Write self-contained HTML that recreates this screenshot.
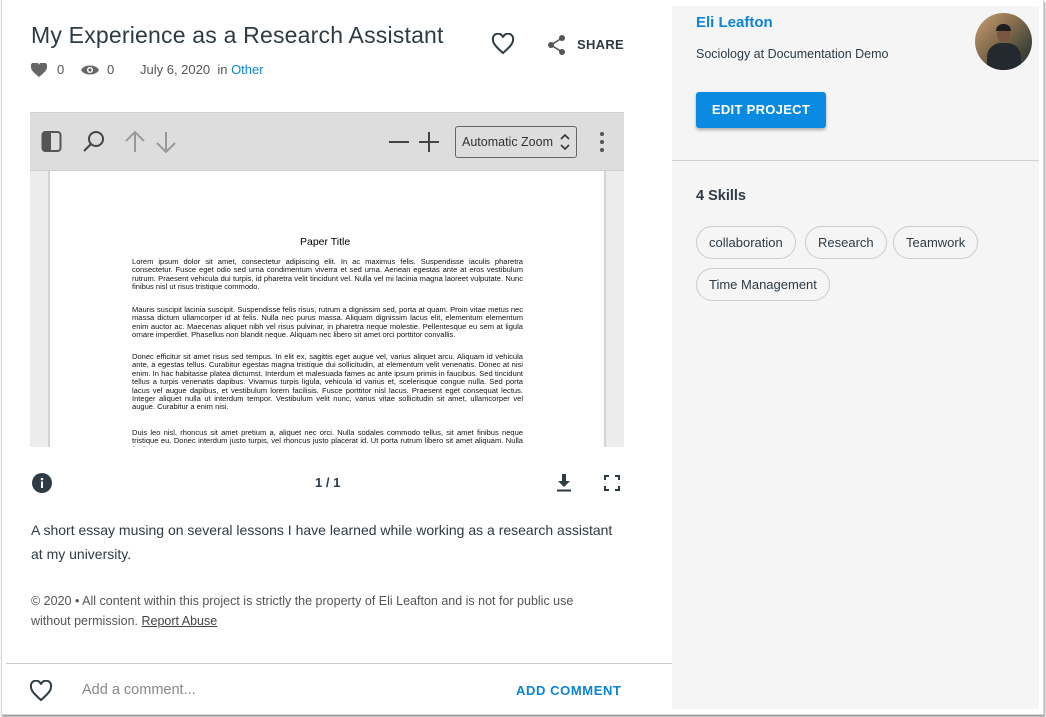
<!DOCTYPE html>
<html><head><style>
*{margin:0;padding:0;box-sizing:border-box}
body{width:1046px;height:717px;background:#fff;font-family:"Liberation Sans",sans-serif;position:relative;overflow:hidden;color:#2d3b45}
.win{position:absolute;left:1px;top:0;width:1043px;height:715px;border:1px solid #d6d6d6;border-top:none;box-shadow:1px 2px 2px #999;background:#fff}
.a{position:absolute}
.side{position:absolute;left:672px;top:6px;width:367px;height:703px;background:#f5f5f5}
.pill{position:absolute;height:33px;border:1px solid #c7cdd1;border-radius:17px;font-size:13px;color:#2d3b45;line-height:31px;padding:0 12px;background:#f5f5f5}
.pp{font-family:"Liberation Sans",sans-serif;font-size:7.55px;line-height:8.4px;text-align:justify;color:#111;position:absolute;left:132px;width:391px}
</style></head><body>
<div class="win"></div>
<div class="side"></div>
<div class="a" style="left:31px;top:22px;font-size:23px;color:#2d3b45;letter-spacing:.2px">My Experience as a Research Assistant</div>
<svg class="a" style="left:491px;top:33px" width="24" height="22" viewBox="0 0 24 22"><path d="M12 20 C4 13 2 10 2 7 A5 5 0 0 1 12 4.5 A5 5 0 0 1 22 7 C22 10 20 13 12 20Z" fill="none" stroke="#2d3b45" stroke-width="2"/></svg>
<svg class="a" style="left:547px;top:34px" width="20" height="22" viewBox="0 0 20 22"><circle cx="15" cy="4" r="3" fill="#555"/><circle cx="4" cy="11" r="3" fill="#555"/><circle cx="15" cy="18" r="3" fill="#555"/><path d="M15 4L4 11L15 18" stroke="#555" stroke-width="1.6" fill="none"/></svg>
<div class="a" style="left:577px;top:37px;font-size:13px;font-weight:bold;color:#2d3b45;letter-spacing:.3px">SHARE</div>
<svg class="a" style="left:31px;top:63px" width="16" height="14" viewBox="0 0 16 14"><path d="M8 14C2 9 0 7 0 4A4 4 0 0 1 8 2A4 4 0 0 1 16 4C16 7 14 9 8 14Z" fill="#666"/></svg>
<div class="a" style="left:57px;top:62px;font-size:13px;color:#555">0</div>
<svg class="a" style="left:81px;top:64px" width="18" height="12" viewBox="0 0 18 12"><path d="M0 6C3 0 15 0 18 6C15 12 3 12 0 6Z" fill="#666"/><circle cx="9" cy="6" r="3" fill="#fff"/><circle cx="9" cy="6" r="1.6" fill="#666"/></svg>
<div class="a" style="left:107px;top:62px;font-size:13px;color:#555">0</div>
<div class="a" style="left:140px;top:62px;font-size:13px;color:#555">July 6, 2020 &nbsp;in <span style="color:#0a84d6">Other</span></div>
<!-- pdf viewer -->
<div class="a" style="left:30px;top:112px;width:594px;height:335px;background:#ececec"></div>
<div class="a" style="left:30px;top:112px;width:594px;height:59px;background:#dddddd;border-top:1px solid #d0d0d0;border-bottom:1px solid #cfcfcf"></div>
<div class="a" style="left:48px;top:171px;width:558px;height:276px;background:#d4d4d4"></div>
<div class="a" style="left:50px;top:171px;width:554px;height:276px;background:#fff"></div>
<svg class="a" style="left:41px;top:130px" width="22" height="24" viewBox="0 0 22 24"><rect x="1.5" y="2" width="18" height="19" rx="3" fill="none" stroke="#555" stroke-width="2"/><path d="M1.5 5a3 3 0 0 1 3-3H10V21H4.5a3 3 0 0 1-3-3Z" fill="#555"/></svg>
<svg class="a" style="left:82px;top:129px" width="24" height="24" viewBox="0 0 24 24"><circle cx="14" cy="10" r="7" fill="none" stroke="#444" stroke-width="2"/><path d="M9 15L2 22" stroke="#444" stroke-width="2"/></svg>
<svg class="a" style="left:124px;top:130px" width="54" height="24" viewBox="0 0 54 24"><path d="M11 22V2M2 11L11 2L20 11" stroke="#999" stroke-width="2" fill="none"/><path d="M42 2V22M33 13L42 22L51 13" stroke="#999" stroke-width="2" fill="none"/></svg>
<svg class="a" style="left:388px;top:131px" width="52" height="22" viewBox="0 0 52 22"><path d="M1 11H21M31 11H51M41 1V21" stroke="#444" stroke-width="2"/></svg>
<div class="a" style="left:455px;top:126px;width:122px;height:32px;border:1px solid #666;border-radius:3px;font-size:12.5px;color:#333;line-height:30px;padding-left:6px">Automatic Zoom</div>
<svg class="a" style="left:559px;top:132px" width="12" height="20" viewBox="0 0 12 20"><path d="M2 7L6 3L10 7M2 13L6 17L10 13" stroke="#333" stroke-width="1.6" fill="none"/></svg>
<svg class="a" style="left:598px;top:131px" width="8" height="22" viewBox="0 0 8 22"><circle cx="4" cy="3" r="2" fill="#555"/><circle cx="4" cy="11" r="2" fill="#555"/><circle cx="4" cy="19" r="2" fill="#555"/></svg>
<div class="a" style="left:300px;top:236px;font-size:10.5px;color:#000">Paper Title</div>
<div class="pp" style="top:258px">Lorem ipsum dolor sit amet, consectetur adipiscing elit. In ac maximus felis. Suspendisse iaculis pharetra consectetur. Fusce eget odio sed urna condimentum viverra et sed urna. Aenean egestas ante at eros vestibulum rutrum. Praesent vehicula dui turpis, id pharetra velit tincidunt vel. Nulla vel mi lacinia magna laoreet vulputate. Nunc finibus nisl ut risus tristique commodo.</div>
<div class="pp" style="top:306px">Mauris suscipit lacinia suscipit. Suspendisse felis risus, rutrum a dignissim sed, porta at quam. Proin vitae metus nec massa dictum ullamcorper id at felis. Nulla nec purus massa. Aliquam dignissim lacus elit, elementum elementum enim auctor ac. Maecenas aliquet nibh vel risus pulvinar, in pharetra neque molestie. Pellentesque eu sem at ligula ornare imperdiet. Phasellus non blandit neque. Aliquam nec libero sit amet orci porttitor convallis.</div>
<div class="pp" style="top:353px">Donec efficitur sit amet risus sed tempus. In elit ex, sagittis eget augue vel, varius aliquet arcu. Aliquam id vehicula ante, a egestas tellus. Curabitur egestas magna tristique dui sollicitudin, at elementum velit venenatis. Donec at nisi enim. In hac habitasse platea dictumst. Interdum et malesuada fames ac ante ipsum primis in faucibus. Sed tincidunt tellus a turpis venenatis dapibus. Vivamus turpis ligula, vehicula id varius et, scelerisque congue nulla. Sed porta lacus vel augue dapibus, et vestibulum lorem facilisis. Fusce porttitor nisl lacus. Praesent eget consequat lectus. Integer aliquet nulla ut interdum tempor. Vestibulum velit nunc, varius vitae sollicitudin sit amet, ullamcorper vel augue. Curabitur a enim nisi.</div>
<div class="a" style="left:50px;top:429px;width:554px;height:18px;overflow:hidden"><div class="pp" style="top:0;left:82px">Duis leo nisl, rhoncus sit amet pretium a, aliquet nec orci. Nulla sodales commodo tellus, sit amet finibus neque tristique eu. Donec interdum justo turpis, vel rhoncus justo placerat id. Ut porta rutrum libero sit amet aliquam. Nulla facilisi.</div></div>
<!-- controls -->
<svg class="a" style="left:32px;top:473px" width="20" height="20" viewBox="0 0 20 20"><circle cx="10" cy="10" r="10" fill="#2d3b45"/><rect x="9" y="8.5" width="2" height="6.5" fill="#fff"/><circle cx="10" cy="6" r="1.3" fill="#fff"/></svg>
<div class="a" style="left:315px;top:475px;font-size:13px;font-weight:bold;color:#2d3b45">1 / 1</div>
<svg class="a" style="left:556px;top:474px" width="16" height="18" viewBox="0 0 16 18"><path d="M6 0H10V7H14L8 13L2 7H6Z" fill="#2d3b45"/><rect x="1" y="15.5" width="14" height="2" fill="#2d3b45"/></svg>
<svg class="a" style="left:604px;top:475px" width="16" height="16" viewBox="0 0 16 16"><path d="M1 5V1H5M11 1H15V5M15 11V15H11M5 15H1V11" stroke="#2d3b45" stroke-width="2" fill="none"/></svg>
<div class="a" style="left:31px;top:518px;width:588px;font-size:14px;line-height:24px;color:#2d3b45">A short essay musing on several lessons I have learned while working as a research assistant at my university.</div>
<div class="a" style="left:31px;top:591px;width:578px;font-size:12.5px;line-height:20px;color:#555">© 2020 • All content within this project is strictly the property of Eli Leafton and is not for public use without permission. <span style="text-decoration:underline;color:#444">Report Abuse</span></div>
<div class="a" style="left:6px;top:663px;width:666px;height:1px;background:#ccc"></div>
<svg class="a" style="left:29px;top:680px" width="24" height="22" viewBox="0 0 24 22"><path d="M12 20 C4 13 2 10 2 7 A5 5 0 0 1 12 4.5 A5 5 0 0 1 22 7 C22 10 20 13 12 20Z" fill="none" stroke="#2d3b45" stroke-width="2"/></svg>
<div class="a" style="left:82px;top:682px;font-size:14.5px;color:#888">Add a comment...</div>
<div class="a" style="left:516px;top:683px;font-size:13px;font-weight:bold;color:#0a84d6;letter-spacing:.6px">ADD COMMENT</div>
<!-- side -->
<div class="a" style="left:696px;top:14px;font-size:15px;font-weight:bold;color:#0a84d6">Eli Leafton</div>
<div class="a" style="left:696px;top:47px;font-size:12.5px;color:#2d3b45">Sociology at Documentation Demo</div>
<div class="a" style="left:975px;top:13px;width:57px;height:57px;border-radius:50%;overflow:hidden;background:linear-gradient(135deg,#c8a070,#8a7050 40%,#3b4036 80%)">
<div class="a" style="left:22px;top:14px;width:13px;height:15px;border-radius:50%;background:#7a5540"></div>
<div class="a" style="left:21px;top:11px;width:15px;height:7px;border-radius:7px 7px 0 0;background:#1e1e1e"></div>
<div class="a" style="left:12px;top:30px;width:34px;height:30px;border-radius:14px 14px 0 0;background:#24292f"></div>
</div>
<div class="a" style="left:696px;top:92px;width:130px;height:36px;background:#0a8ae0;border-radius:3px;box-shadow:0 2px 3px rgba(0,0,0,.3);color:#fff;font-size:13px;font-weight:bold;text-align:center;line-height:36px;letter-spacing:.3px">EDIT PROJECT</div>
<div class="a" style="left:672px;top:160px;width:367px;height:1px;background:#cdd2d5"></div>
<div class="a" style="left:696px;top:188px;font-size:14.5px;font-weight:bold;color:#2d3b45">4 Skills</div>
<div class="pill" style="left:696px;top:226px">collaboration</div>
<div class="pill" style="left:805px;top:226px">Research</div>
<div class="pill" style="left:893px;top:226px">Teamwork</div>
<div class="pill" style="left:696px;top:268px">Time Management</div>
</body></html>
